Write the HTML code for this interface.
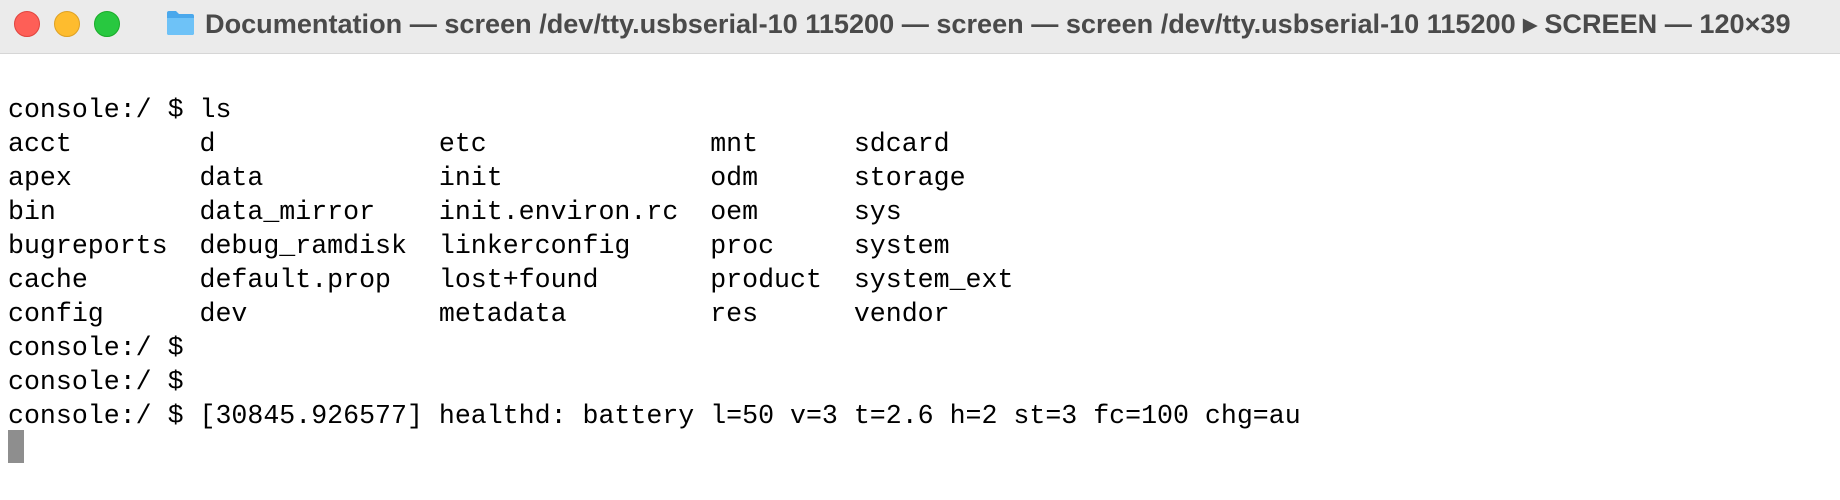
<!DOCTYPE html>
<html><head><meta charset="utf-8"><style>
html,body{margin:0;padding:0;width:1840px;height:500px;background:#fff;overflow:hidden}
.bar{position:absolute;left:0;top:0;width:1840px;height:53px;background:#ebebeb;border-bottom:1px solid #d6d6d6}
.dot{position:absolute;top:11px;width:24px;height:24px;border-radius:50%}
.title{position:absolute;left:205px;top:8px;font:bold 27.1px "Liberation Sans",sans-serif;color:#4a4a4a;white-space:nowrap}
pre{position:absolute;left:8px;top:93px;margin:0;font:26.6px/34px "Liberation Mono",monospace;color:#000}
.cur{position:absolute;left:8px;top:430px;width:16px;height:33px;background:#8e8e8e}
</style></head><body>
<div class="bar">
<div class="dot" style="left:14px;background:#fe5f57;border:0.5px solid #e0443e"></div>
<div class="dot" style="left:54px;background:#febc2e;border:0.5px solid #dea123"></div>
<div class="dot" style="left:94px;background:#28c840;border:0.5px solid #1aab29"></div>
<svg style="position:absolute;left:166px;top:10px" width="29" height="26" viewBox="0 0 29 26"><path d="M1 3 Q1 1 3 1 H10 L13 4 H26 Q28 4 28 6 V23 Q28 25 26 25 H3 Q1 25 1 23 Z" fill="#4aa8ec"/><path d="M1 8 H28 V23 Q28 25 26 25 H3 Q1 25 1 23 Z" fill="#6ec2f7"/></svg>
<div class="title">Documentation — screen /dev/tty.usbserial-10 115200 — screen — screen /dev/tty.usbserial-10 115200 ▸ SCREEN — 120×39</div>
</div>
<pre>console:/ $ ls
acct        d              etc              mnt      sdcard
apex        data           init             odm      storage
bin         data_mirror    init.environ.rc  oem      sys
bugreports  debug_ramdisk  linkerconfig     proc     system
cache       default.prop   lost+found       product  system_ext
config      dev            metadata         res      vendor
console:/ $
console:/ $
console:/ $ [30845.926577] healthd: battery l=50 v=3 t=2.6 h=2 st=3 fc=100 chg=au</pre>
<div class="cur"></div>
</body></html>
